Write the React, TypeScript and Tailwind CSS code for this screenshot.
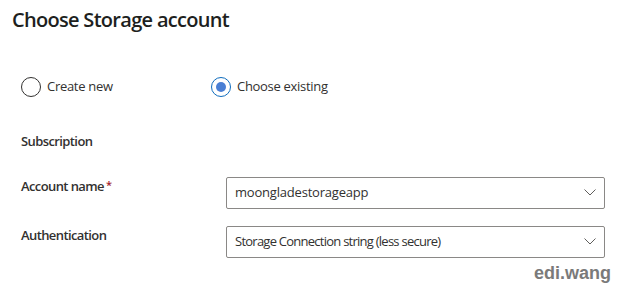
import React, { useState } from 'react';

const font = { fontFamily: '"Open Sans", "Noto Sans", sans-serif' };

const Chevron = () => (
    <svg width="12" height="7" viewBox="0 0 12 7" className="shrink-0">
        <path d="M0.5 0.5 L6 6 L11.5 0.5" fill="none" stroke="#605e5c" strokeWidth="1" />
    </svg>
);

interface RadioProps {
    label: string;
    checked: boolean;
    onSelect: () => void;
}

const Radio: React.FC<RadioProps> = ({ label, checked, onSelect }) => (
    <button onClick={onSelect} className="flex items-center gap-[6px] text-[13px] text-[#323130]">
        <span className={`flex h-5 w-5 items-center justify-center rounded-full border ${checked ? 'border-[#0f6cbd]' : 'border-[#323130]'}`}>
            {checked && <span className="h-[10px] w-[10px] rounded-full bg-[#4a7fd4]"></span>}
        </span>
        <span className="tracking-[-0.3px]">{label}</span>
    </button>
);

const Select: React.FC<{ value: string; tight?: boolean }> = ({ value, tight }) => (
    <div className="flex h-[32px] w-[379px] items-center justify-between rounded-[2px] border border-[#8a8886] pl-2 pr-[8px]">
        <span className={`text-[13px] text-[#323130] ${tight ? 'tracking-[-0.75px]' : 'tracking-[-0.2px]'}`}>{value}</span>
        <Chevron />
    </div>
);

export default function App() {
    const [mode, setMode] = useState<'new' | 'existing'>('existing');

    return (
        <div className="relative h-[295px] w-[635px] overflow-hidden bg-white" style={font}>
            <h1 className="pl-[12px] pt-[6px] text-[20px] font-semibold leading-[28px] tracking-[-0.7px] text-[#201f1e]">
                Choose Storage account
            </h1>

            <div className="mt-[43px] flex items-center pl-[21px]">
                <div className="w-[190px]">
                    <Radio label="Create new" checked={mode === 'new'} onSelect={() => setMode('new')} />
                </div>
                <Radio label="Choose existing" checked={mode === 'existing'} onSelect={() => setMode('existing')} />
            </div>

            <div className="mt-[35px] pl-[21px] text-[13px] font-semibold text-[#323130] tracking-[-0.6px]">
                Subscription
            </div>

            <div className="mt-[25px] flex items-start pl-[21px]">
                <div className="w-[205px] text-[13px] font-semibold text-[#323130] tracking-[-0.6px]">
                    Account name<span className="ml-[2px] align-top text-[11px] text-[#a4262c]">*</span>
                </div>
                <Select value="moongladestorageapp" />
            </div>

            <div className="mt-[17px] flex items-start pl-[21px]">
                <div className="w-[205px] text-[13px] font-semibold text-[#323130] tracking-[-0.6px]">
                    Authentication
                </div>
                <Select value="Storage Connection string (less secure)" tight />
            </div>

            <div
                className="absolute bottom-[8px] right-[24px] text-[18px] font-bold text-[#7a7a7a]"
                style={{ fontFamily: '"Liberation Sans", Arial, sans-serif' }}
            >
                edi.wang
            </div>
        </div>
    );
}
